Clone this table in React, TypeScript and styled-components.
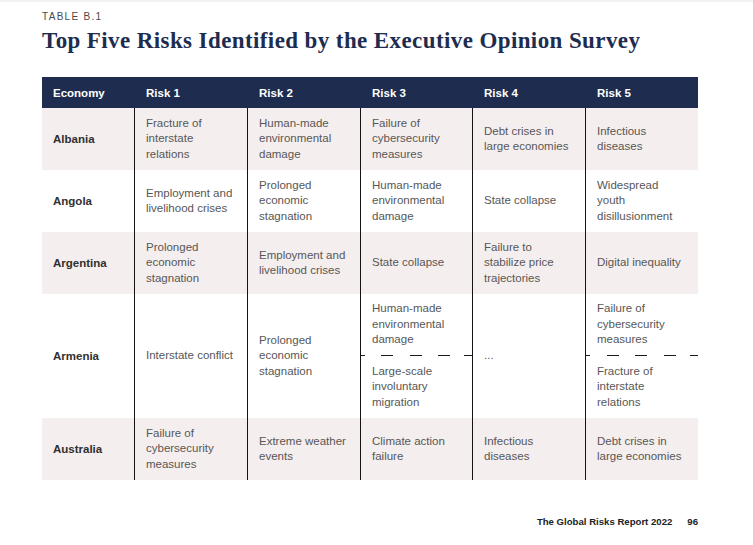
import React from 'react';
import styled, { createGlobalStyle } from 'styled-components';

const Global = createGlobalStyle`
  html, body { margin: 0; padding: 0; background: #ffffff; }
  body { font-family: "Liberation Sans", Arial, sans-serif; }
`;

const Page = styled.div`
  width: 753px;
  height: 545px;
  box-sizing: border-box;
  border-top: 2px solid #f2f2f2;
  padding: 9px 55px 0 42px;
  display: flex;
  flex-direction: column;
`;

const Kicker = styled.div`
  font-size: 10px;
  line-height: 12px;
  letter-spacing: 1.3px;
  color: #4a4a4a;
`;

const Title = styled.h1`
  margin: 5px 0 0;
  font-family: "Liberation Serif", "Times New Roman", serif;
  font-weight: 700;
  font-size: 23px;
  letter-spacing: 0.4px;
  line-height: 26px;
  color: #1e2d4f;
`;

const Table = styled.div`
  margin-top: 23px;
  width: 656px;
  display: flex;
  flex-direction: column;
`;

const COLS = '92px 113px 113px 112px 113px 113px';

const HeaderRow = styled.div`
  display: grid;
  grid-template-columns: ${COLS};
  height: 31px;
  background: #1e2d4f;
`;

const HeadCell = styled.div<{ $first?: boolean }>`
  display: flex;
  align-items: center;
  padding: 0 11px 0 ${p => (p.$first ? 11 : 12)}px;
  color: #ffffff;
  font-weight: 700;
  font-size: 11.5px;
`;

const Row = styled.div<{ $shaded: boolean; $tall: boolean }>`
  display: grid;
  grid-template-columns: ${COLS};
  height: ${p => (p.$tall ? 124 : 62)}px;
  background: ${p => (p.$shaded ? '#f5eeee' : '#ffffff')};
`;

const EconomyCell = styled.div`
  display: flex;
  align-items: center;
  padding: 0 11px;
  font-size: 11.5px;
  font-weight: 700;
  color: #303030;
`;

const Cell = styled.div`
  display: flex;
  flex-direction: column;
  justify-content: center;
  border-left: 1px solid #141414;
  padding: 0 8px 0 11px;
  font-size: 11.5px;
  line-height: 15.5px;
  color: #575757;
`;

const SplitCell = styled.div`
  display: flex;
  flex-direction: column;
  border-left: 1px solid #141414;
`;

const SubCell = styled.div<{ $h: number }>`
  height: ${p => p.$h}px;
  display: flex;
  flex-direction: column;
  justify-content: center;
  padding: 0 8px 0 11px;
  font-size: 11.5px;
  line-height: 15.5px;
  color: #575757;
`;

const DashRule = styled.div`
  height: 1px;
  background-image: repeating-linear-gradient(
    to right,
    #1a1a1a 0px,
    #1a1a1a 12px,
    transparent 12px,
    transparent 28.5px
  );
  background-position: -8px 0;
`;

const Line = styled.span`
  display: block;
  white-space: nowrap;
`;

const Footer = styled.div`
  margin-top: 36px;
  display: flex;
  justify-content: flex-end;
  gap: 15px;
  font-size: 9.6px;
  line-height: 12px;
  font-weight: 700;
  color: #222222;
`;

type Lines = string[];
type Risk = Lines | { split: [Lines, Lines] };

interface RowData {
  economy: string;
  risks: Risk[];
}

const rows: RowData[] = [
  {
    economy: 'Albania',
    risks: [
      ['Fracture of', 'interstate', 'relations'],
      ['Human-made', 'environmental', 'damage'],
      ['Failure of', 'cybersecurity', 'measures'],
      ['Debt crises in', 'large economies'],
      ['Infectious', 'diseases'],
    ],
  },
  {
    economy: 'Angola',
    risks: [
      ['Employment and', 'livelihood crises'],
      ['Prolonged', 'economic', 'stagnation'],
      ['Human-made', 'environmental', 'damage'],
      ['State collapse'],
      ['Widespread', 'youth', 'disillusionment'],
    ],
  },
  {
    economy: 'Argentina',
    risks: [
      ['Prolonged', 'economic', 'stagnation'],
      ['Employment and', 'livelihood crises'],
      ['State collapse'],
      ['Failure to', 'stabilize price', 'trajectories'],
      ['Digital inequality'],
    ],
  },
  {
    economy: 'Armenia',
    risks: [
      ['Interstate conflict'],
      ['Prolonged', 'economic', 'stagnation'],
      { split: [['Human-made', 'environmental', 'damage'], ['Large-scale', 'involuntary', 'migration']] },
      ['...'],
      { split: [['Failure of', 'cybersecurity', 'measures'], ['Fracture of', 'interstate', 'relations']] },
    ],
  },
  {
    economy: 'Australia',
    risks: [
      ['Failure of', 'cybersecurity', 'measures'],
      ['Extreme weather', 'events'],
      ['Climate action', 'failure'],
      ['Infectious', 'diseases'],
      ['Debt crises in', 'large economies'],
    ],
  },
];

const renderLines = (lines: Lines) => lines.map((l, i) => <Line key={i}>{l}</Line>);

export default function App() {
  return (
    <>
      <Global />
      <Page>
        <Kicker>TABLE B.1</Kicker>
        <Title>Top Five Risks Identified by the Executive Opinion Survey</Title>
        <Table>
          <HeaderRow>
            <HeadCell $first>Economy</HeadCell>
            {['Risk 1', 'Risk 2', 'Risk 3', 'Risk 4', 'Risk 5'].map(h => (
              <HeadCell key={h}>{h}</HeadCell>
            ))}
          </HeaderRow>
          {rows.map((row, ri) => {
            const tall = row.risks.some(r => !Array.isArray(r));
            return (
              <Row key={row.economy} $shaded={ri % 2 === 0} $tall={tall}>
                <EconomyCell>{row.economy}</EconomyCell>
                {row.risks.map((risk, ci) =>
                  Array.isArray(risk) ? (
                    <Cell key={ci}>{renderLines(risk)}</Cell>
                  ) : (
                    <SplitCell key={ci}>
                      <SubCell $h={61}>{renderLines(risk.split[0])}</SubCell>
                      <DashRule />
                      <SubCell $h={62}>{renderLines(risk.split[1])}</SubCell>
                    </SplitCell>
                  )
                )}
              </Row>
            );
          })}
        </Table>
        <Footer>
          <span>The Global Risks Report 2022</span>
          <span>96</span>
        </Footer>
      </Page>
    </>
  );
}
